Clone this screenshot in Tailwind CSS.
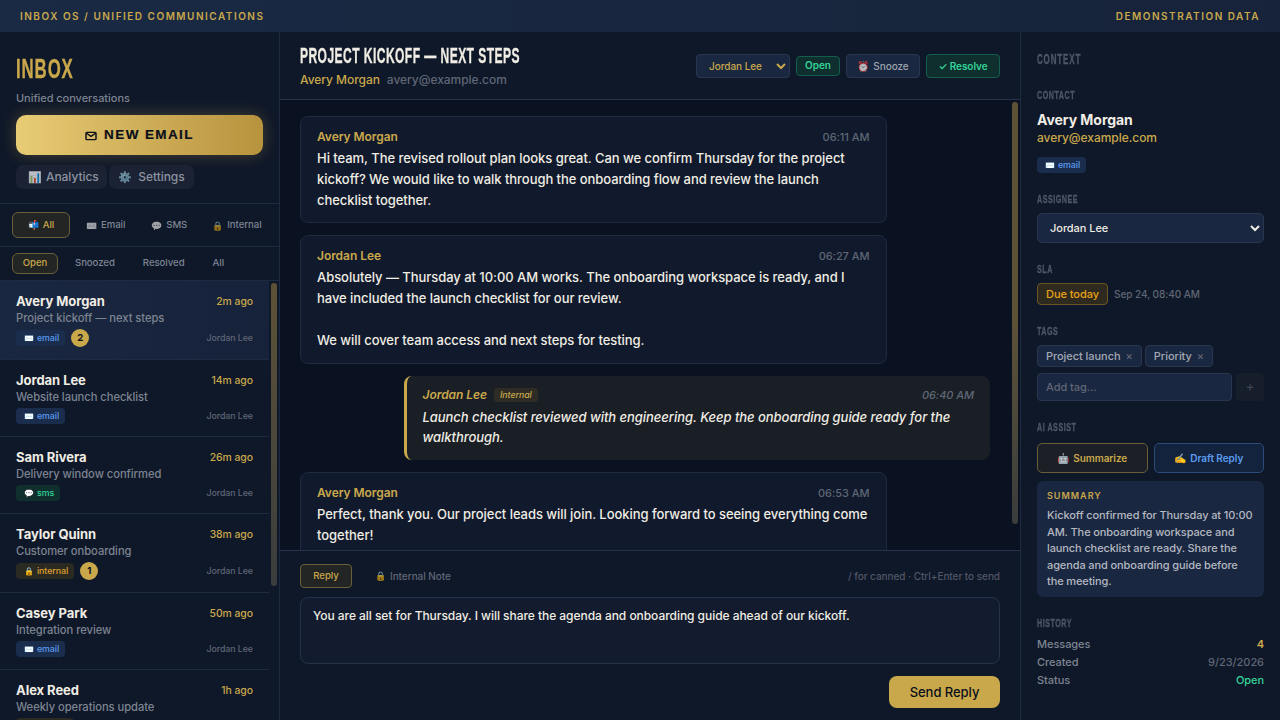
<!DOCTYPE html>
<html>
<head>
    <title>Inbox OS</title>
    <meta charset="utf-8">
    <script src="https://cdn.jsdelivr.net/npm/@tailwindcss/browser@4"></script>
</head>
<body class="bg-[#0f1829] text-[#f0ede4] font-['Inter',sans-serif] font-medium tracking-[-0.003em] h-[720px] overflow-hidden flex flex-col">
    <!-- top bar -->
    <div class="h-[32px] shrink-0 flex items-center justify-between px-5 bg-gradient-to-r from-[#1a2a44] to-[#16233a] text-[#c9a84c] text-[10px] font-semibold tracking-[1.5px]">
        <span>INBOX OS / UNIFIED COMMUNICATIONS</span>
        <span>DEMONSTRATION DATA</span>
    </div>

    <div class="flex flex-1 min-h-0">
        <!-- left sidebar -->
        <div class="w-[280px] shrink-0 flex flex-col border-r border-[#1e2a40]">
            <div class="px-4 pt-[19px] pb-[14px] border-b border-[#1e2a40]">
                <div class="w-max origin-left scale-x-[0.6] font-['Liberation_Sans',sans-serif] font-bold text-[28px] leading-[36px] tracking-[1.5px] text-[#c9a84c] [-webkit-text-stroke:0.4px_#c9a84c]">INBOX</div>
                <div class="text-[11px] leading-[16px] mt-[3px] text-[#7d8491]">Unified conversations</div>
                <button class="w-full h-[40px] mt-[9px] pt-[1px] rounded-[10px] bg-gradient-to-r from-[#e8cc74] to-[#b8933e] text-[#0a0f1a] font-['Liberation_Sans',sans-serif] font-bold text-[13.5px] tracking-[1.4px] [-webkit-text-stroke:0.2px_#0a0f1a] shadow-[0_0_16px_rgba(201,168,76,0.3)] flex items-center justify-center gap-[7px]">
                    <svg width="12" height="10" viewBox="0 0 13 11" fill="none" stroke="#0a0f1a" stroke-width="1.6"><rect x="1" y="1.5" width="11" height="8" rx="1"/><path d="M1.5 2.5 6.5 6l5-3.5"/></svg>
                    NEW EMAIL
                </button>
                <div class="flex mt-[10px]">
                    <button class="h-[24px] w-[91px] rounded-[7px] bg-[#1a2233] text-[#8d93a0] text-[12px] pl-[12px] flex items-center gap-[4px]"><span class="text-[11px] opacity-70">📊</span>Analytics</button>
                    <button class="h-[24px] w-[85px] ml-[2px] rounded-[7px] bg-[#1a2233] text-[#8d93a0] text-[12px] flex items-center justify-center gap-[6px]"><span class="text-[11px] opacity-70">⚙️</span>Settings</button>
                </div>
            </div>
            <div class="h-[43px] shrink-0 flex items-center px-3 border-b border-[#1e2a40] text-[9.6px] text-[#7d8491]">
                <button class="h-[26px] w-[58px] rounded-[6px] border border-[#6b5f3a] bg-[#222523] text-[#c9a84c] flex items-center justify-center gap-[4px]"><span class="text-[9px]">📬</span>All</button>
                <span class="ml-[16px] pt-[1px] flex items-center gap-[4px]"><span class="text-[9px] opacity-60 grayscale">✉️</span>Email</span>
                <span class="ml-[26px] pt-[1px] flex items-center gap-[4px]"><span class="text-[9px] opacity-60 grayscale">💬</span>SMS</span>
                <span class="ml-[25px] pt-[1px] flex items-center gap-[4px]"><span class="text-[9px] opacity-60">🔒</span>Internal</span>
            </div>
            <div class="h-[34px] shrink-0 flex items-center px-3 border-b border-[#1e2a40] text-[9.6px] text-[#7d8491]">
                <button class="h-[21px] w-[46px] rounded-[6px] border border-[#6b5f3a] bg-[#222523] text-[#c9a84c]">Open</button>
                <span class="ml-[17px]">Snoozed</span>
                <span class="ml-[28px]">Resolved</span>
                <span class="ml-[28px]">All</span>
            </div>
            <!-- conversation list -->
            <div class="relative flex-1 min-h-0 overflow-hidden pr-[10px]">
                <div class="h-[79px] px-4 pt-[12px] border-b border-[#1e2a40] bg-gradient-to-r from-[#1a2740] to-[#16223a]">
                    <div class="flex justify-between items-center h-[17px]"><span class="text-[13px] font-bold">Avery Morgan</span><span class="text-[10.4px] text-[#c9a84c]">2m ago</span></div>
                    <div class="text-[11.2px] leading-[16px] text-[#7d8491]">Project kickoff — next steps</div>
                    <div class="flex items-center mt-[3px]">
                        <span class="h-[16px] pl-2 pr-[6px] rounded-[4px] bg-[#1a2d4d] text-[#5b9cf0] text-[8.8px] flex items-center gap-[3px]"><span class="text-[8px]">✉️</span>email</span>
                        <span class="ml-[6px] w-[18px] h-[18px] rounded-full bg-[#c9a84c] text-[#0a0f1a] text-[9.6px] font-bold flex items-center justify-center">2</span>
                        <span class="ml-auto text-[8.8px] text-[#5f6675]">Jordan Lee</span>
                    </div>
                </div>
                <div class="h-[77px] px-4 pt-[12px] border-b border-[#1e2a40]">
                    <div class="flex justify-between items-center h-[17px]"><span class="text-[13px] font-bold">Jordan Lee</span><span class="text-[10.4px] text-[#c9a84c]">14m ago</span></div>
                    <div class="text-[11.2px] leading-[16px] text-[#7d8491]">Website launch checklist</div>
                    <div class="flex items-center mt-[3px]">
                        <span class="h-[16px] pl-2 pr-[6px] rounded-[4px] bg-[#1a2d4d] text-[#5b9cf0] text-[8.8px] flex items-center gap-[3px]"><span class="text-[8px]">✉️</span>email</span>
                        <span class="ml-auto text-[8.8px] text-[#5f6675]">Jordan Lee</span>
                    </div>
                </div>
                <div class="h-[77px] px-4 pt-[12px] border-b border-[#1e2a40]">
                    <div class="flex justify-between items-center h-[17px]"><span class="text-[13px] font-bold">Sam Rivera</span><span class="text-[10.4px] text-[#c9a84c]">26m ago</span></div>
                    <div class="text-[11.2px] leading-[16px] text-[#7d8491]">Delivery window confirmed</div>
                    <div class="flex items-center mt-[3px]">
                        <span class="h-[16px] pl-2 pr-[6px] rounded-[4px] bg-[#10302f] text-[#34d399] text-[8.8px] flex items-center gap-[3px]"><span class="text-[8px]">💬</span>sms</span>
                        <span class="ml-auto text-[8.8px] text-[#5f6675]">Jordan Lee</span>
                    </div>
                </div>
                <div class="h-[79px] px-4 pt-[12px] border-b border-[#1e2a40]">
                    <div class="flex justify-between items-center h-[17px]"><span class="text-[13px] font-bold">Taylor Quinn</span><span class="text-[10.4px] text-[#c9a84c]">38m ago</span></div>
                    <div class="text-[11.2px] leading-[16px] text-[#7d8491]">Customer onboarding</div>
                    <div class="flex items-center mt-[3px]">
                        <span class="h-[16px] pl-2 pr-[6px] rounded-[4px] bg-[#2a2a22] text-[#e0a030] text-[8.8px] flex items-center gap-[3px]"><span class="text-[8px]">🔒</span>internal</span>
                        <span class="ml-[6px] w-[18px] h-[18px] rounded-full bg-[#c9a84c] text-[#0a0f1a] text-[9.6px] font-bold flex items-center justify-center">1</span>
                        <span class="ml-auto text-[8.8px] text-[#5f6675]">Jordan Lee</span>
                    </div>
                </div>
                <div class="h-[77px] px-4 pt-[12px] border-b border-[#1e2a40]">
                    <div class="flex justify-between items-center h-[17px]"><span class="text-[13px] font-bold">Casey Park</span><span class="text-[10.4px] text-[#c9a84c]">50m ago</span></div>
                    <div class="text-[11.2px] leading-[16px] text-[#7d8491]">Integration review</div>
                    <div class="flex items-center mt-[3px]">
                        <span class="h-[16px] pl-2 pr-[6px] rounded-[4px] bg-[#1a2d4d] text-[#5b9cf0] text-[8.8px] flex items-center gap-[3px]"><span class="text-[8px]">✉️</span>email</span>
                        <span class="ml-auto text-[8.8px] text-[#5f6675]">Jordan Lee</span>
                    </div>
                </div>
                <div class="h-[77px] px-4 pt-[12px] border-b border-[#1e2a40]">
                    <div class="flex justify-between items-center h-[17px]"><span class="text-[13px] font-bold">Alex Reed</span><span class="text-[10.4px] text-[#c9a84c]">1h ago</span></div>
                    <div class="text-[11.2px] leading-[16px] text-[#7d8491]">Weekly operations update</div>
                    <div class="flex items-center mt-[3px]">
                        <span class="h-[16px] pl-2 pr-[6px] rounded-[4px] bg-[#2a2a22] text-[#e0a030] text-[8.8px] flex items-center gap-[3px]"><span class="text-[8px]">🔒</span>internal</span>
                        <span class="ml-auto text-[8.8px] text-[#5f6675]">Jordan Lee</span>
                    </div>
                </div>
                <div class="absolute right-[2px] top-[2px] w-[6px] h-[303px] rounded-[3px] bg-gradient-to-b from-[#5e5236] to-[#3a3d3c]"></div>
            </div>
        </div>

        <!-- thread -->
        <div class="flex-1 min-w-0 flex flex-col">
            <div class="h-[68px] shrink-0 px-5 flex items-center justify-between border-b border-[#26324a] bg-[#0f1829]">
                <div class="w-[300px] shrink-0">
                    <div class="w-max origin-left scale-x-[0.548] font-['Liberation_Sans',sans-serif] font-bold text-[22px] leading-[26px] tracking-[0.8px] [-webkit-text-stroke:0.3px_#f0ede4]">PROJECT KICKOFF — NEXT STEPS</div>
                    <div class="text-[12px] leading-[18px] mt-[2px]"><span class="text-[#c9a84c]">Avery Morgan</span><span class="ml-[7px] text-[#5f6675]">avery@example.com</span></div>
                </div>
                <div class="flex items-center shrink-0 gap-[6px] text-[10px]">
                    <select class="h-[24px] w-[94px] rounded-[4px] border border-[#2a3650] bg-[#1a2740] text-[#c9a84c] pl-[8px]"><option>Jordan Lee</option></select>
                    <span class="h-[20px] w-[44px] justify-center rounded-[4px] border border-[#155e4e] bg-[#0f2f2e] text-[#34d399] flex items-center font-semibold">Open</span>
                    <button class="h-[24px] w-[74px] pt-[1px] rounded-[4px] border border-[#2a3650] bg-[#1a2740] text-[#9ca3af] flex items-center justify-center gap-[4px]"><span class="text-[10px] opacity-70">⏰</span>Snooze</button>
                    <button class="h-[24px] w-[74px] pt-[1px] rounded-[4px] border border-[#155e4e] bg-[#0f2f2e] text-[#34d399] font-semibold">✓ Resolve</button>
                </div>
            </div>
            <div class="relative flex-1 min-h-0 overflow-hidden pr-[10px] bg-[#0a1120]">
                <div class="px-5 py-4 flex flex-col gap-3">
                    <div class="w-[85%] rounded-[8px] border border-[#1e2a40] bg-[#111a2c] px-4 pt-[11px] pb-[11px]">
                        <div class="flex justify-between items-center h-[18px]"><span class="text-[12px] font-semibold text-[#c9a84c]">Avery Morgan</span><span class="text-[11px] text-[#5f6675]">06:11 AM</span></div>
                        <div class="text-[13px] leading-[21px] mt-[2px]">Hi team, The revised rollout plan looks great. Can we confirm Thursday for the project kickoff? We would like to walk through the onboarding flow and review the launch checklist together.</div>
                    </div>
                    <div class="w-[85%] rounded-[8px] border border-[#1e2a40] bg-[#111a2c] px-4 pt-[11px] pb-[12px]">
                        <div class="flex justify-between items-center h-[18px]"><span class="text-[12px] font-semibold text-[#c9a84c]">Jordan Lee</span><span class="text-[11px] text-[#5f6675]">06:27 AM</span></div>
                        <div class="text-[13px] leading-[21px] mt-[2px]">Absolutely — Thursday at 10:00 AM works. The onboarding workspace is ready, and I have included the launch checklist for our review.<br><br>We will cover team access and next steps for testing.</div>
                    </div>
                    <div class="w-[85%] self-end rounded-[8px] border-l-[3px] border-[#c9a84c] bg-[#1a1f26] pl-4 pr-4 pt-[10px] pb-[13px] italic">
                        <div class="flex items-center h-[18px]"><span class="text-[12px] font-semibold text-[#c9a84c]">Jordan Lee</span><span class="ml-[7px] h-[14px] px-[6px] rounded-[3px] bg-[#2e2c24] text-[#c9a84c] text-[8.8px] flex items-center">Internal</span><span class="ml-auto text-[11px] text-[#5f6675]">06:40 AM</span></div>
                        <div class="text-[13px] leading-[20px] mt-[3px]">Launch checklist reviewed with engineering. Keep the onboarding guide ready for the walkthrough.</div>
                    </div>
                    <div class="w-[85%] rounded-[8px] border border-[#1e2a40] bg-[#111a2c] px-4 pt-[11px] pb-[11px]">
                        <div class="flex justify-between items-center h-[18px]"><span class="text-[12px] font-semibold text-[#c9a84c]">Avery Morgan</span><span class="text-[11px] text-[#5f6675]">06:53 AM</span></div>
                        <div class="text-[13px] leading-[21px] mt-[2px]">Perfect, thank you. Our project leads will join. Looking forward to seeing everything come together!</div>
                    </div>
                </div>
                <div class="absolute right-[2px] top-[2px] w-[6px] h-[422px] rounded-[3px] bg-gradient-to-b from-[#5e5236] via-[#5e5236] to-[#3a3d3c]"></div>
            </div>
            <!-- composer -->
            <div class="h-[170px] shrink-0 border-t border-[#26324a] bg-[#0f1829] px-5 pt-[13px]">
                <div class="flex items-center text-[9.6px]">
                    <button class="h-[24px] w-[52px] rounded-[4px] border border-[#6b5f3a] bg-[#222523] text-[#c9a84c]">Reply</button>
                    <span class="ml-[23px] flex items-center gap-[4px] text-[10px] text-[#5f6675]"><span class="text-[9px] opacity-70">🔒</span>Internal Note</span>
                    <span class="ml-auto text-[10px] text-[#4f5666]">/ for canned · Ctrl+Enter to send</span>
                </div>
                <textarea class="block w-full h-[67px] mt-[9px] rounded-[8px] border border-[#26324a] bg-[#131c2e] px-3 py-[9px] text-[12px] leading-[18px] text-[#f0ede4] resize-none">You are all set for Thursday. I will share the agenda and onboarding guide ahead of our kickoff.</textarea>
                <div class="flex justify-end mt-3">
                    <button class="h-[32px] w-[111px] pt-[1px] rounded-[8px] bg-[#c9a84c] text-[#0a0f1a] text-[13px] font-medium">Send Reply</button>
                </div>
            </div>
        </div>

        <!-- context panel -->
        <div class="w-[260px] shrink-0 border-l border-[#1e2a40] pl-4 pr-4 pt-[19px]">
            <div class="w-max origin-left scale-x-[0.57] font-['Liberation_Sans',sans-serif] font-bold text-[14px] leading-[16px] tracking-[1.5px] text-[#4f5666] [-webkit-text-stroke:0.4px_#4f5666]">CONTEXT</div>
            <div class="w-max origin-left scale-x-[0.65] font-['Liberation_Sans',sans-serif] font-bold text-[11px] leading-[14px] tracking-[0.8px] text-[#4f5666] [-webkit-text-stroke:0.3px_#4f5666] mt-[21px]">CONTACT</div>
            <div class="text-[14px] leading-[18px] font-bold mt-[9px]">Avery Morgan</div>
            <div class="text-[12px] leading-[18px] text-[#c9a84c]">avery@example.com</div>
            <span class="inline-flex h-[16px] pl-2 pr-[6px] mt-[10px] rounded-[4px] bg-[#1a2d4d] text-[#5b9cf0] text-[8.8px] items-center gap-[3px]"><span class="text-[8px]">✉️</span>email</span>

            <div class="w-max origin-left scale-x-[0.65] font-['Liberation_Sans',sans-serif] font-bold text-[11px] leading-[14px] tracking-[0.8px] text-[#4f5666] [-webkit-text-stroke:0.3px_#4f5666] mt-[18px]">ASSIGNEE</div>
            <select class="block w-full h-[30px] mt-[7px] rounded-[5px] border border-[#2a3650] bg-[#1a2740] text-[#f0ede4] text-[11px] pl-[8px]"><option>Jordan Lee</option></select>

            <div class="w-max origin-left scale-x-[0.65] font-['Liberation_Sans',sans-serif] font-bold text-[11px] leading-[14px] tracking-[0.8px] text-[#4f5666] [-webkit-text-stroke:0.3px_#4f5666] mt-[19px]">SLA</div>
            <div class="flex items-center mt-[7px]">
                <span class="h-[22px] px-2 rounded-[4px] border border-[#6b5522] bg-[#2f2a20] text-[#e8a317] text-[11px] flex items-center">Due today</span>
                <span class="ml-[6px] text-[10px] text-[#5f6675]">Sep 24, 08:40 AM</span>
            </div>

            <div class="w-max origin-left scale-x-[0.65] font-['Liberation_Sans',sans-serif] font-bold text-[11px] leading-[14px] tracking-[0.8px] text-[#4f5666] [-webkit-text-stroke:0.3px_#4f5666] mt-[19px]">TAGS</div>
            <div class="flex gap-[3px] mt-[7px]">
                <span class="h-[22px] px-2 rounded-[4px] border border-[#2a3650] bg-[#1a2740] text-[#a3a9b5] text-[11px] flex items-center gap-[5px]">Project launch<span class="text-[#5f6675]">×</span></span>
                <span class="h-[22px] px-2 rounded-[4px] border border-[#2a3650] bg-[#1a2740] text-[#a3a9b5] text-[11px] flex items-center gap-[5px]">Priority<span class="text-[#5f6675]">×</span></span>
            </div>
            <div class="flex gap-1 mt-[6px]">
                <input class="w-[195px] h-[28px] rounded-[4px] border border-[#2a3650] bg-[#1a2740] px-2 text-[11px] placeholder:text-[#5f6675]" placeholder="Add tag...">
                <button class="w-[28px] h-[28px] rounded-[4px] bg-[#171e2b] text-[#3f4553] text-[13px]">+</button>
            </div>

            <div class="w-max origin-left scale-x-[0.65] font-['Liberation_Sans',sans-serif] font-bold text-[11px] leading-[14px] tracking-[0.8px] text-[#4f5666] [-webkit-text-stroke:0.3px_#4f5666] mt-[19px]">AI ASSIST</div>
            <div class="flex gap-[6px] mt-[9px]">
                <button class="flex-1 h-[30px] rounded-[5px] border border-[#6b5f3a] bg-[#1c2026] text-[#c9a84c] text-[10px] font-semibold flex items-center justify-center gap-[4px]"><span>🤖</span>Summarize</button>
                <button class="flex-1 h-[30px] rounded-[5px] border border-[#2b4a78] bg-[#14233d] text-[#5b9cf0] text-[10px] font-semibold flex items-center justify-center gap-[4px]"><span>✍️</span>Draft Reply</button>
            </div>
            <div class="mt-2 rounded-[6px] bg-[#1a2740] px-[10px] pt-[9px] pb-[7px]">
                <div class="text-[9px] leading-[12px] font-semibold tracking-[1px] text-[#c9a84c]">SUMMARY</div>
                <div class="text-[11px] leading-[16.5px] tracking-[-0.01em] text-[#b4b8c0] mt-[5px]">Kickoff confirmed for Thursday at 10:00 AM. The onboarding workspace and launch checklist are ready. Share the agenda and onboarding guide before the meeting.</div>
            </div>

            <div class="w-max origin-left scale-x-[0.65] font-['Liberation_Sans',sans-serif] font-bold text-[11px] leading-[14px] tracking-[0.8px] text-[#4f5666] [-webkit-text-stroke:0.3px_#4f5666] mt-[19px]">HISTORY</div>
            <div class="mt-[5px] text-[11px] leading-[18px] text-[#7d8491]">
                <div class="flex justify-between"><span>Messages</span><span class="text-[#c9a84c] font-semibold">4</span></div>
                <div class="flex justify-between"><span>Created</span><span class="text-[#5f6675]">9/23/2026</span></div>
                <div class="flex justify-between"><span>Status</span><span class="text-[#34d399]">Open</span></div>
            </div>
        </div>
    </div>
</body>
</html>
